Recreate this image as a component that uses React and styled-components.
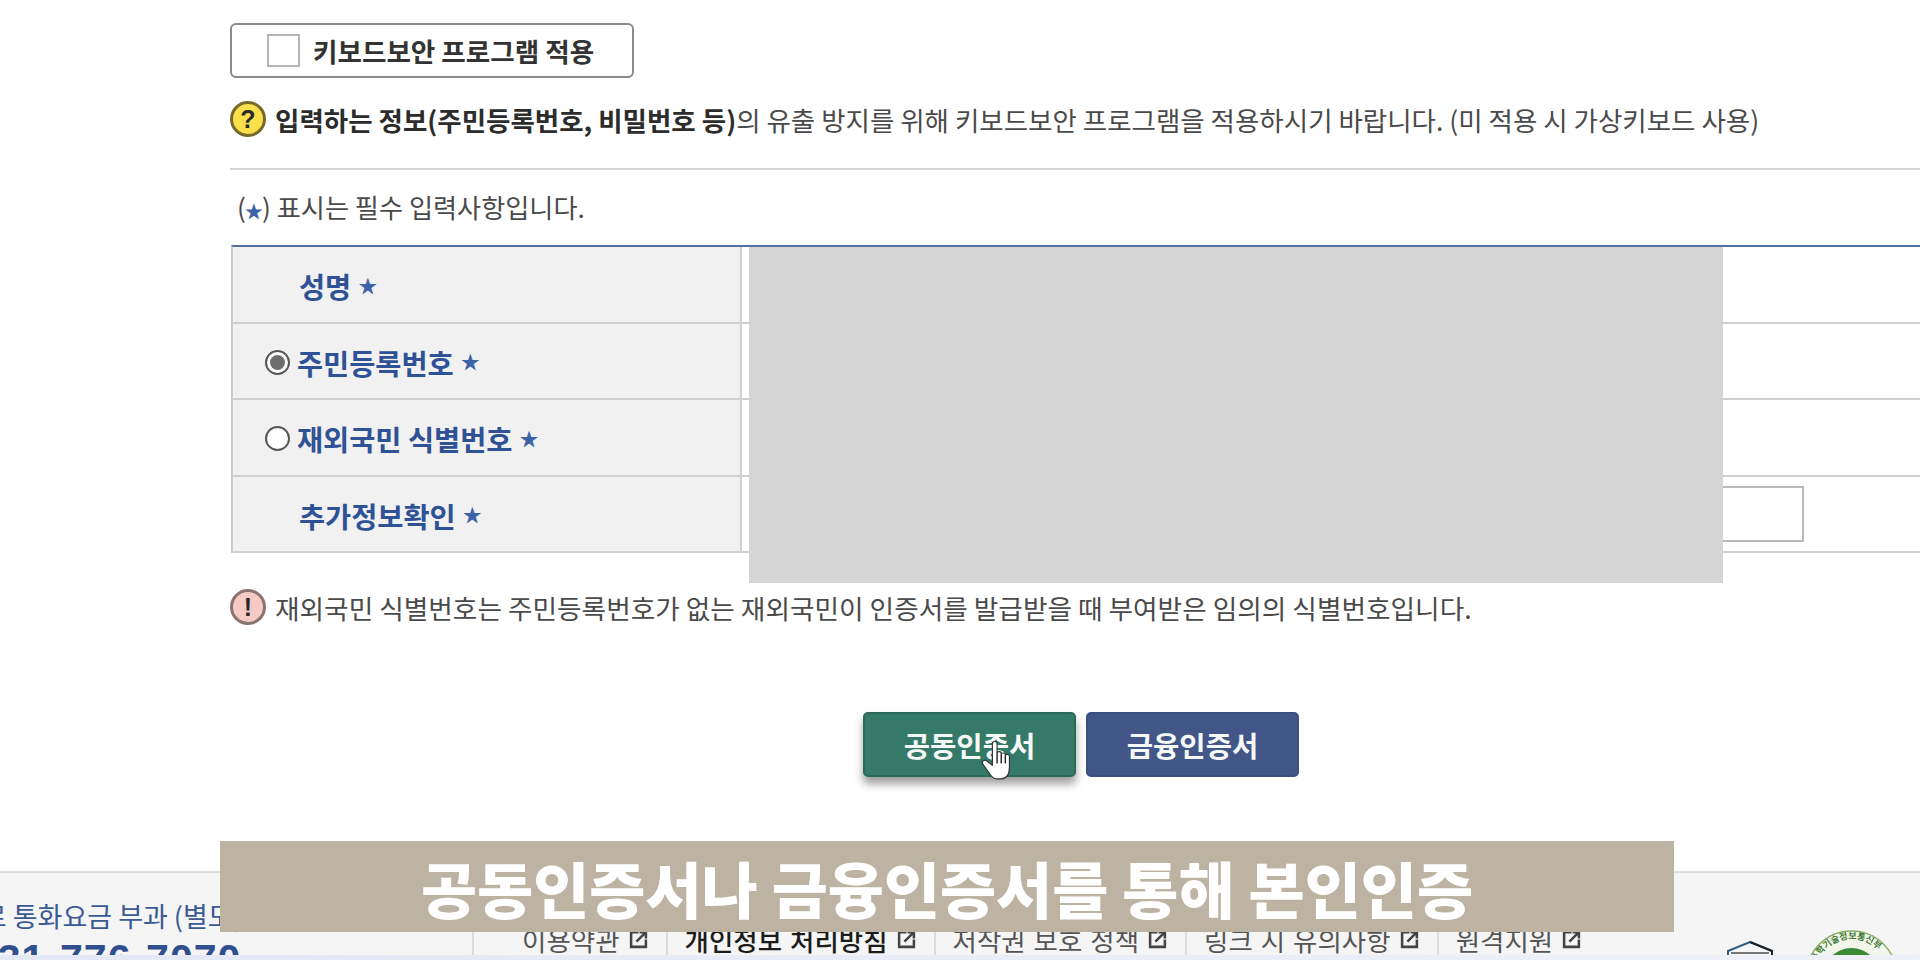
import styled, { createGlobalStyle } from 'styled-components'

const GlobalStyle = createGlobalStyle`
  html, body { margin: 0; padding: 0; background: #fff; }
  * { box-sizing: border-box; }
`

const Page = styled.div`
  position: relative;
  width: 1920px;
  height: 960px;
  overflow: hidden;
  display: flex;
  flex-direction: column;
  background: #fff;
  font-family: "Noto Sans CJK KR", "Noto Sans", sans-serif;
  color: #4a4a4a;
`

const Content = styled.main`
  padding: 23px 0 0 230px;
`

const KeyboardButton = styled.button`
  display: flex;
  align-items: center;
  width: 404px;
  height: 55px;
  padding: 0 0 0 35px;
  background: #fff;
  border: 2px solid #8a8a8a;
  border-radius: 6px;
  font: 700 26.6px "Noto Sans CJK KR", sans-serif;
  color: #333;
`

const Checkbox = styled.span`
  width: 33px;
  height: 33px;
  margin-right: 13px;
  border: 2px solid #b5b5b5;
  background: #fff;
`

const InfoLine = styled.p`
  display: flex;
  align-items: center;
  gap: 9px;
  margin: ${p => p.$top}px 0 0;
  height: 36px;
  font-size: ${p => p.$size}px;
  white-space: nowrap;
  strong { font-weight: 700; color: #2c2c2c; }
`

const Badge = styled.span`
  flex: none;
  display: flex;
  align-items: center;
  justify-content: center;
  width: 36px;
  height: 36px;
  border-radius: 50%;
  border: 3px solid ${p => p.$tone === 'help' ? '#77692a' : '#8a7370'};
  background: ${p => p.$tone === 'help' ? '#fbe04c' : '#f6cbc6'};
  font: 700 25px "Liberation Sans", sans-serif;
  color: #2a2a2a;
`

const Divider = styled.hr`
  margin: 31px 0 0;
  height: 2px;
  border: 0;
  background: #d4d4d4;
`

const RequiredNote = styled.p`
  margin: 19px 0 0 7px;
  height: 36px;
  line-height: 36px;
  font-size: 26.2px;
  white-space: nowrap;
`

const Star = styled.span`
  font-family: "DejaVu Sans", sans-serif;
  font-size: ${p => p.$size || 19}px;
  font-weight: 700;
  color: #3c62a8;
  -webkit-text-stroke: 1px #3c62a8;
`

const Table = styled.section`
  display: grid;
  grid-auto-rows: 1fr;
  height: 308px;
  margin: 20px 0 0 1px;
  border-top: 2px solid #4f6fa5;
  border-left: 2px solid #ccc;
`

const Row = styled.div`
  display: grid;
  grid-template-columns: 509px 1fr;
  border-bottom: 2px solid #cfcfcf;
`

const Label = styled.div`
  display: flex;
  align-items: center;
  gap: 8px;
  padding: 3px 0 0 ${p => p.$radio ? 32 : 66}px;
  background: #f1f1f1;
  border-right: 2px solid #cfcfcf;
  font-size: 28.4px;
  font-weight: 700;
  color: #2f5297;
  white-space: nowrap;
`

const Radio = styled.span`
  flex: none;
  display: flex;
  align-items: center;
  justify-content: center;
  width: 25px;
  height: 25px;
  margin-right: -1px;
  border-radius: 50%;
  border: 2px solid #555;
  background: #fff;
  &::after {
    content: '';
    width: 15px;
    height: 15px;
    border-radius: 50%;
    background: ${p => p.$checked ? '#6e6e6e' : 'transparent'};
  }
`

const Value = styled.div`
  display: flex;
  align-items: center;
  padding-left: 20px;
  background: #fff;
`

const TextInput = styled.input`
  width: 1042px;
  height: 56px;
  border: 2px solid #b8b8b8;
  background: #fff;
`

const Buttons = styled.div`
  display: flex;
  gap: 10px;
  margin: 87px 0 0 633px;
`

const CertButton = styled.button`
  position: relative;
  width: 213px;
  height: 65px;
  padding: 0;
  border: 2px solid ${p => p.$color === 'green' ? '#2c6a58' : '#3b4f80'};
  border-radius: 5px;
  background: ${p => p.$color === 'green' ? '#357a69' : '#425688'};
  box-shadow: ${p => p.$color === 'green' ? '0 7px 9px rgba(0,0,0,.38)' : 'none'};
  color: #f6f8f7;
  font: 700 28.6px "Noto Sans CJK KR", sans-serif;
`

const HandCursor = styled.svg`
  position: absolute;
  left: 115px;
  top: 26px;
  width: 33px;
  height: 40px;
`

const Footer = styled.footer`
  display: flex;
  flex: none;
  height: 84px;
  margin-top: auto;
  overflow: hidden;
  background: #f5f5f5;
  border-top: 2px solid #dedede;
`

const Contact = styled.div`
  flex: none;
  width: 472px;
  padding-top: 24px;
  white-space: nowrap;
  overflow: hidden;
`

const ContactNote = styled.p`
  margin: 0 0 0 -43px;
  height: 38px;
  line-height: 38px;
  font-size: 27px;
  color: #3b5a94;
`

const ContactPhone = styled.p`
  margin: 0 0 0 -26px;
  font: 700 41px/48px "Liberation Sans", sans-serif;
  letter-spacing: 1px;
  color: #2f4f8f;
`

const FooterLinks = styled.nav`
  display: flex;
  align-self: flex-end;
  height: 32px;
`

const FooterLink = styled.a`
  display: flex;
  align-items: center;
  gap: 9px;
  height: 32px;
  padding: 0 18px 0 17px;
  border-left: 2px solid #dcdcdc;
  font-size: 26.5px;
  word-spacing: 2px;
  font-weight: ${p => p.$strong ? 500 : 400};
  color: ${p => p.$strong ? '#1c1c1c' : '#555'};
  white-space: nowrap;
  &:first-child { padding-left: 48px; }
`

const Logos = styled.div`
  display: flex;
  gap: 31px;
  margin-left: auto;
  padding: 57px 22px 0 0;
`

const SealLogo = styled.svg`
  flex: none;
  width: 93px;
  height: 93px;
`

const ShieldLogo = styled.svg`
  flex: none;
  width: 48px;
  height: 56px;
  margin-top: 11px;
`

const BottomBand = styled.div`
  flex: none;
  height: 5px;
  background: linear-gradient(90deg, #e3e8f5, #eef1f7);
`

const Mask = styled.div`
  position: absolute;
  left: 749px;
  top: 247px;
  width: 974px;
  height: 336px;
  background: #d5d5d5;
`

const Banner = styled.div`
  position: absolute;
  left: 220px;
  top: 841px;
  display: flex;
  align-items: center;
  justify-content: center;
  width: 1454px;
  height: 91px;
  padding-top: 2px;
  background: #bdb3a3;
  font-size: 61px;
  font-weight: 900;
  color: #fff;
  white-space: nowrap;
`

const ExternalIcon = () => (
  <svg width="19" height="19" viewBox="0 0 18 18" fill="none" stroke="#444" strokeWidth="2.400">
    <path d="M9 2H2v14h14V9" />
    <path d="M7 11l9-9M10 2h6v6" />
  </svg>
)

const Hand = () => (
  <HandCursor viewBox="0 0 26 34">
    <path
      d="M9.500 3.200C9.500.6 13.500.6 13.500 3.200v8.300c0-2.100 3.500-2.100 3.500 0v1c0-1.900 3.500-1.900 3.500 0v1c0-1.700 3.500-1.700 3.500.2V23c0 5-1.500 10-7 10h-4c-3 0-4.500-2-6-4.500L1.400 20.500c-1.400-2 1.200-4.500 3.200-2.900L9.500 21.500z"
      fill="#fff"
      stroke="#333"
      strokeWidth="1"
      strokeLinejoin="round"
    />
    <path d="M13.500 11.500V20M17 12.500V20M20.500 13.500V20" stroke="#222" strokeWidth="1.200" fill="none" />
  </HandCursor>
)

const links = [
  { text: '이용약관' },
  { text: '개인정보 처리방침', strong: true },
  { text: '저작권 보호 정책' },
  { text: '링크 시 유의사항' },
  { text: '원격지원' },
]

export default function App() {
  return (
    <Page>
      <GlobalStyle />
      <Content>
        <KeyboardButton type="button">
          <Checkbox />
          키보드보안 프로그램 적용
        </KeyboardButton>
        <InfoLine $top={23} $size={26.5}>
          <Badge $tone="help">?</Badge>
          <span><strong>입력하는 정보(주민등록번호, 비밀번호 등)</strong>의 유출 방지를 위해 키보드보안 프로그램을 적용하시기 바랍니다. (미 적용 시 가상키보드 사용)</span>
        </InfoLine>
        <Divider />
        <RequiredNote>(<Star $size={18}>★</Star>) 표시는 필수 입력사항입니다.</RequiredNote>
        <Table>
          <Row>
            <Label>성명 <Star>★</Star></Label>
            <Value />
          </Row>
          <Row>
            <Label $radio><Radio $checked />주민등록번호 <Star>★</Star></Label>
            <Value />
          </Row>
          <Row>
            <Label $radio><Radio />재외국민 식별번호 <Star>★</Star></Label>
            <Value />
          </Row>
          <Row>
            <Label>추가정보확인 <Star>★</Star></Label>
            <Value><TextInput /></Value>
          </Row>
        </Table>
        <InfoLine $top={36} $size={26.7}>
          <Badge $tone="warn">!</Badge>
          <span>재외국민 식별번호는 주민등록번호가 없는 재외국민이 인증서를 발급받을 때 부여받은 임의의 식별번호입니다.</span>
        </InfoLine>
        <Buttons>
          <CertButton type="button" $color="green">
            공동인증서
            <Hand />
          </CertButton>
          <CertButton type="button" $color="blue">금융인증서</CertButton>
        </Buttons>
      </Content>

      <Footer>
        <Contact>
          <ContactNote>유료 통화요금 부과 (별도)</ContactNote>
          <ContactPhone>031-776-7070</ContactPhone>
        </Contact>
        <FooterLinks>
          {links.map(link => (
            <FooterLink key={link.text} $strong={link.strong}>
              {link.text}
              <ExternalIcon />
            </FooterLink>
          ))}
        </FooterLinks>
        <Logos>
          <ShieldLogo viewBox="0 0 48 56">
            <path d="M2 10L24 1l22 9v40H2z" fill="#f4f6f8" stroke="#2f5f86" strokeWidth="2" />
            <path d="M24 1l22 9v6" fill="none" stroke="#222" strokeWidth="2" />
            <rect x="5" y="11" width="38" height="2" fill="#777" />
          </ShieldLogo>
          <SealLogo viewBox="0 0 93 93">
            <circle cx="46.500" cy="46.500" r="45.500" fill="#f3f6ea" stroke="#8ab06a" strokeWidth="1.500" />
            <circle cx="46.500" cy="46.500" r="28.500" fill="#3c8a35" />
            <defs>
              <path id="sealArc" d="M9 46.500a37.500 37.500 0 0 1 75 0" />
            </defs>
            <text fontSize="9" fontWeight="700" fill="#3f7a35">
              <textPath href="#sealArc" startOffset="12%">과학기술정보통신부</textPath>
            </text>
          </SealLogo>
        </Logos>
      </Footer>
      <BottomBand />

      <Mask />
      <Banner>공동인증서나 금융인증서를 통해 본인인증</Banner>
    </Page>
  )
}
